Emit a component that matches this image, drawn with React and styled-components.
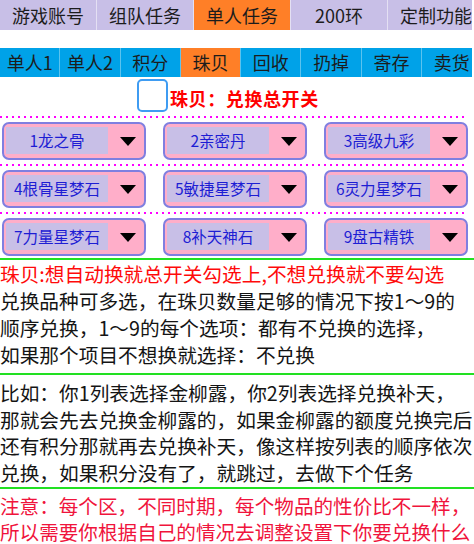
import styled, { createGlobalStyle } from "styled-components";

const GlobalStyle = createGlobalStyle`
  html, body {
    margin: 0;
    padding: 0;
    background: #fff;
  }
  body {
    font-family: "Noto Sans CJK SC", "Noto Sans", sans-serif;
  }
`;

const Page = styled.div`
  width: 474px;
  height: 544px;
  overflow: hidden;
  background: #fff;
`;

const TabStrip = styled.div`
  width: 472px;
  overflow: hidden;
  display: grid;
  grid-auto-flow: column;
  grid-auto-columns: ${({ $w }) => $w}px;
  column-gap: 1px;
  height: ${({ $h }) => $h}px;
  margin-top: ${({ $top }) => $top || 0}px;
  background: ${({ $line }) => $line};
`;

const Tab = styled.div`
  background: ${({ $active, $bg }) => ($active ? "#ff7f27" : $bg)};
  color: #1c1c1c;
  font-size: 18px;
  line-height: ${({ $h }) => $h}px;
  text-align: center;
  white-space: nowrap;
`;

const SwitchRow = styled.div`
  display: flex;
  align-items: center;
  padding: 2px 0 0 137px;
  height: 33px;
`;

const CheckBox = styled.span`
  width: 27px;
  height: 29px;
  border: 2px solid #3f9cf2;
  border-radius: 5px;
  background: #fff;
`;

const SwitchLabel = styled.span`
  margin-left: 2px;
  color: #ff0000;
  font-size: 18px;
  font-weight: 700;
  letter-spacing: 0.6px;
  padding-top: 4px;
`;

const Picker = styled.div`
  display: flex;
  flex-direction: column;
  gap: 4px;
  padding: 4px 0 2px;
  border-bottom: 2px solid #22e022;
`;

const Dotted = styled.div`
  width: 466px;
  height: 2px;
  background: repeating-linear-gradient(90deg, #ff00ff 0 2px, transparent 2px 6px);
`;

const BoxRow = styled.div`
  display: grid;
  grid-template-columns: repeat(3, 144px);
  column-gap: 17px;
  padding-left: 2px;
`;

const Select = styled.div`
  height: 34px;
  border: 2px solid #7f7fe0;
  border-radius: 7px;
  background: #ffaec9;
  display: flex;
  align-items: flex-start;
`;

const SelectValue = styled.div`
  width: 102px;
  height: 27px;
  margin: 3px 0 0 2px;
  background: #c8bfe7;
  color: #1d1dd4;
  font-size: 15.5px;
  line-height: 27px;
  text-align: center;
  white-space: nowrap;
`;

const ArrowCell = styled.div`
  flex: 1;
  height: 34px;
  display: flex;
  align-items: center;
  justify-content: center;
  padding-left: 3px;
`;

const Arrow = styled.span`
  width: 0;
  height: 0;
  border-left: 8.5px solid transparent;
  border-right: 8.5px solid transparent;
  border-top: 9px solid #000;
`;

const Note = styled.div`
  padding: ${({ $pad }) => $pad};
  border-bottom: ${({ $last }) => ($last ? "none" : "2px solid #22e022")};
`;

const Line = styled.div`
  white-space: nowrap;
  font-size: ${({ $size }) => $size || 19.7}px;
  line-height: ${({ $lh }) => $lh}px;
  color: ${({ $color }) => $color || "#141414"};
`;

const topTabs = ["游戏账号", "组队任务", "单人任务", "200环", "定制功能"];
const subTabs = ["单人1", "单人2", "积分", "珠贝", "回收", "扔掉", "寄存", "卖货"];
const items = [
  ["1龙之骨", "2亲密丹", "3高级九彩"],
  ["4根骨星梦石", "5敏捷星梦石", "6灵力星梦石"],
  ["7力量星梦石", "8补天神石", "9盘古精铁"],
];

const noteOne = [
  "兑换品种可多选，在珠贝数量足够的情况下按1～9的",
  "顺序兑换，1～9的每个选项：都有不兑换的选择，",
  "如果那个项目不想换就选择：不兑换",
];

const noteTwo = [
  "比如：你1列表选择金柳露，你2列表选择兑换补天，",
  "那就会先去兑换金柳露的，如果金柳露的额度兑换完后",
  "还有积分那就再去兑换补天，像这样按列表的顺序依次",
  "兑换，如果积分没有了，就跳过，去做下个任务",
];

const noteThree = [
  "注意：每个区，不同时期，每个物品的性价比不一样，",
  "所以需要你根据自己的情况去调整设置下你要兑换什么",
];

export default function App() {
  return (
    <Page>
      <GlobalStyle />
      <TabStrip $w={96} $h={30} $line="#e4e0f3">
        {topTabs.map((t) => (
          <Tab key={t} $h={30} $bg="#c8bfe7" $active={t === "单人任务"}>
            {t}
          </Tab>
        ))}
      </TabStrip>
      <TabStrip $w={59.3} $h={29} $top={18} $line="#5cc3ee">
        {subTabs.map((t) => (
          <Tab key={t} $h={29} $bg="#00a2e8" $active={t === "珠贝"}>
            {t}
          </Tab>
        ))}
      </TabStrip>

      <SwitchRow>
        <CheckBox />
        <SwitchLabel>珠贝：兑换总开关</SwitchLabel>
      </SwitchRow>

      <Picker>
        {items.map((row, i) => (
          <div key={i} style={{ display: "contents" }}>
            <Dotted />
            <BoxRow>
              {row.map((name) => (
                <Select key={name}>
                  <SelectValue>{name}</SelectValue>
                  <ArrowCell>
                    <Arrow />
                  </ArrowCell>
                </Select>
              ))}
            </BoxRow>
          </div>
        ))}
      </Picker>

      <Note $pad="0 0 5px">
        <Line $lh={27} $color="#ff0a0a">
          珠贝:想自动换就总开关勾选上,不想兑换就不要勾选
        </Line>
        {noteOne.map((l) => (
          <Line key={l} $lh={27}>
            {l}
          </Line>
        ))}
      </Note>

      <Note $pad="5px 0 1px">
        {noteTwo.map((l) => (
          <Line key={l} $lh={26.5}>
            {l}
          </Line>
        ))}
      </Note>

      <Note $pad="4px 0 0" $last>
        {noteThree.map((l) => (
          <Line key={l} $lh={26} $size={19.6} $color="#f0143c">
            {l}
          </Line>
        ))}
      </Note>
    </Page>
  );
}
